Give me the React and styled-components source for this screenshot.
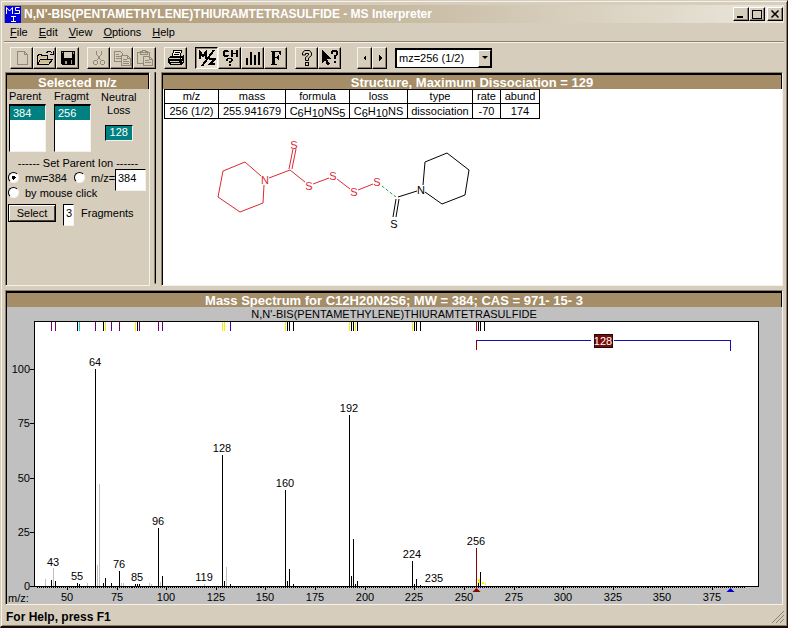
import React from "react";
import styled, { createGlobalStyle } from "styled-components";

const face = "#d6cdbd";
const shade = "#8c806e";
const light = "#f6f2ea";
const brown = "#a48d67";
const teal = "#008080";

const GlobalStyle = createGlobalStyle`
  *, *::before, *::after { box-sizing: border-box; }
  body {
    margin: 0;
    background: ${face};
    color: #000;
    font: 11px/14px "Liberation Sans", Arial, sans-serif;
  }
  button, input, select { font: inherit; color: inherit; margin: 0; padding: 0; border-radius: 0; }
`;

const AppWindow = styled.div`
  display: flex;
  flex-direction: column;
  min-height: 100vh;
  padding: 4px 3px 0 3px;
  background: ${face};
  border: 1px solid;
  border-color: ${face} #1c0c0c #1c0c0c ${face};
  border-bottom-width: 2px;
  box-shadow: inset 1px 1px 0 ${light}, inset -1px -1px 0 ${shade};
`;

const TitleBar = styled.header`
  display: flex;
  align-items: center;
  height: 18px;
  padding: 0 1px;
  background: linear-gradient(90deg, #a48d67, #ebe7dd);
`;

const AppTitle = styled.h1`
  flex: 1;
  margin: 0 0 0 3px;
  color: #fff;
  font-size: 12px;
  font-weight: bold;
  white-space: nowrap;
`;

const CaptionButton = styled.button`
  display: grid;
  place-items: center;
  width: 16px;
  height: 14px;
  margin-left: ${(p) => (p.$apart ? "2px" : "0")};
  background: ${face};
  border: 1px solid;
  border-color: #fff #000 #000 #fff;
  box-shadow: inset -1px -1px 0 ${shade};
`;

const MenuBar = styled.nav`
  display: flex;
  gap: 11px;
  height: 19px;
  padding: 2px 6px;
  border-bottom: 1px solid ${shade};
  box-shadow: 0 1px 0 ${light};
`;

const MenuItem = styled.button`
  background: none;
  border: 0;
  line-height: 14px;
  &::first-letter { text-decoration: underline; }
`;

const Toolbar = styled.div`
  display: flex;
  align-items: center;
  gap: 8px;
  height: 30px;
  padding: 1px 6px 0;
`;

const ToolGroup = styled.div`
  display: flex;
  margin-left: ${(p) => (p.$apart ? "8px" : "0")};
`;

const ToolButton = styled.button`
  display: grid;
  place-items: center;
  width: ${(p) => (p.$narrow ? "15px" : "23px")};
  height: 22px;
  background: ${(p) => (p.$pressed ? "#e6dfd2" : face)};
  border: 1px solid;
  border-color: ${(p) => (p.$pressed ? "#000 #fff #fff #000" : "#f6f2ea #000 #000 #f6f2ea")};
  box-shadow: inset ${(p) => (p.$pressed ? "1px 1px" : "-1px -1px")} 0 ${shade};
`;

const Combo = styled.label`
  display: grid;
  width: 97px;
  height: 20px;
  border: 1px solid #000;
  border-width: 2px 1px 1px 2px;
  background: #fff;
`;

const ComboSelect = styled.select`
  grid-area: 1 / 1;
  appearance: none;
  width: 100%;
  padding-left: 2px;
  background: none;
  border: 0;
  outline: 0;
`;

const ComboArrow = styled.span`
  grid-area: 1 / 1;
  justify-self: end;
  display: grid;
  place-items: center;
  width: 13px;
  background: ${face};
  border: 1px solid;
  border-color: #fff #000 #000 #fff;
  pointer-events: none;
`;

const Workspace = styled.main`
  display: grid;
  grid-template-columns: 145px 11px minmax(0, 1fr);
  row-gap: 4px;
  padding: 0 1px;
`;

const Splitter = styled.div`
  margin: 0 5px 2px 4px;
  border: 1px solid;
  border-color: ${shade} #000 ${face} ${shade};
`;

const Panel = styled.section`
  grid-column: ${(p) => (p.$wide ? "1 / -1" : "auto")};
  display: flex;
  flex-direction: column;
  background: ${(p) => p.$fill || face};
  border: 1px solid;
  border-color: ${shade} ${light} ${light} ${shade};
`;

const PanelBody = styled.div`
  flex: 1;
  min-height: ${(p) => p.$min || "0"};
  border-left: 1px solid #000;
`;

const PanelTitle = styled.h2`
  height: 16px;
  margin: 0;
  background: ${brown};
  border: 1px solid #000;
  border-top-width: 2px;
  border-bottom: 0;
  color: #fff;
  font-size: 13px;
  line-height: 15px;
  font-weight: bold;
  text-align: center;
  white-space: nowrap;
`;

const Pickers = styled.div`
  display: flex;
  gap: 8px;
  padding: 0 2px;
`;

const Picker = styled.div`
  width: 37px;
`;

const PickerLabel = styled.div`
  height: 15px;
  white-space: nowrap;
`;

const ListBox = styled.ul`
  height: 48px;
  margin: 0;
  padding: 0;
  list-style: none;
  background: #fff;
  border: 1px solid;
  border-color: #000 ${light} ${light} #000;
  border-top-width: 2px;
`;

const ListItem = styled.li`
  padding-left: 3px;
  background: ${teal};
  color: #fff;
  line-height: 14px;
`;

const Loss = styled.div`
  display: flex;
  flex-direction: column;
  align-items: center;
  padding: 2px 0 0 2px;
  line-height: 13px;
  text-align: center;
`;

const LossValue = styled.output`
  width: 28px;
  height: 16px;
  margin-top: 8px;
  background: ${teal};
  border: 1px solid;
  border-color: #000 ${light} ${light} #000;
  color: #fff;
`;

const GroupCaption = styled.div`
  margin: 4px 0 0;
  text-align: center;
`;

const FormRow = styled.div`
  display: flex;
  align-items: center;
  height: ${(p) => p.$height};
  padding-left: 1px;
`;

const RadioLabel = styled.label`
  display: flex;
  align-items: center;
  gap: 6px;
  width: ${(p) => p.$width || "auto"};
  white-space: nowrap;
`;

const Radio = styled.input`
  appearance: none;
  flex: none;
  width: 11px;
  height: 11px;
  border: 1px solid;
  border-color: #000 ${light} ${light} #000;
  border-radius: 50%;
  background: #fff;
  &:checked { background: radial-gradient(circle, #000 0 2px, #fff 2px); }
`;

const TextField = styled.input`
  align-self: flex-start;
  width: ${(p) => p.$width};
  height: 22px;
  padding: 0 0 4px 2px;
  background: #fff;
  border: 1px solid;
  border-color: #000 ${light} ${light} #000;
  outline: 0;
`;

const MassField = styled(TextField)`
  margin: -1px 0 0;
`;

const SelectButton = styled.button`
  width: 48px;
  height: 18px;
  background: ${face};
  border: 1px solid #000;
  box-shadow: inset 1px 1px 0 #fff, inset -1px -1px 0 #4a4238;
`;

const CountRow = styled.div`
  display: flex;
  gap: 7px;
  padding: 4px 1px;
`;

const CountLabel = styled.label`
  line-height: 19px;
`;

const FragmentTable = styled.table`
  margin: 0 0 0 1px;
  border-collapse: collapse;
  table-layout: fixed;
  width: 376px;
  th, td {
    height: 15px;
    padding: 0;
    border: 1px solid #000;
    font-weight: normal;
    line-height: 13px;
    text-align: center;
    white-space: nowrap;
  }
  th { height: 14px; }
`;

const Count = styled.sub`
  font-size: 11px;
  line-height: 0;
  vertical-align: -2px;
`;

const Col = styled.col`
  width: ${(p) => p.$width};
`;

const Molecule = styled.svg`
  display: block;
  width: 280px;
  height: 110px;
  margin: 10px 0 0 42px;
  font-size: 11px;
  text-anchor: middle;
`;

const Chart = styled.svg`
  display: block;
  width: 100%;
  height: auto;
  background: #c0c0c0;
  font-size: 11px;
`;

const StatusBar = styled.footer`
  display: flex;
  flex: 1;
  align-items: flex-start;
  justify-content: space-between;
  padding: 5px 0 0 2px;
  font-size: 12px;
  font-weight: bold;
`;

const Icon = ({ size = 18, children }) => (
  <svg width={size} height={size} viewBox={`0 0 ${size} ${size}`} fill="none" stroke="#000" shapeRendering="crispEdges" aria-hidden="true">
    {children}
  </svg>
);

const faded = "#948a78";

const icons = {
  new: <Icon><path d="M4.5 2.5h7l3 3v10h-10zM11.5 2.5v3h3" stroke={faded} /></Icon>,
  open: (
    <Icon>
      <path d="M1.5 15.5v-9h1v-1h3v1h6v3M1.5 15.5l3-5h12l-4 5z" />
      <path d="M3 14l2-3h10l-3 3zM3 7h7v2H4l-1 2z" fill="#d0c08c" stroke="none" />
      <path d="M10.500 3.500l2-1h2l2 2M17.500 2v4M14 5.500h3" />
    </Icon>
  ),
  save: (
    <Icon>
      <path d="M2 2h14v14H3l-1-1z" fill="#000" stroke="none" />
      <path d="M5 3h8v6H5z" fill={face} stroke="none" />
      <path d="M3 3h1v1H3zM14 3h1v2h-1zM6 12h2v3H6zM12 11h1v4h-1z" fill="#a79b86" stroke="none" />
    </Icon>
  ),
  cut: (
    <Icon>
      <g stroke={faded}>
        <path d="M6.500 2v3l4 6M11.500 2v3l-4 6" />
        <circle cx="5.500" cy="13.500" r="2" />
        <circle cx="12.500" cy="13.500" r="2" />
      </g>
    </Icon>
  ),
  copy: (
    <Icon>
      <g stroke={faded}>
        <path d="M1.500 2.500h6l2 2v8h-8zM3 5.500h3M3 7.500h5M3 9.500h5" />
        <path d="M8.500 6.500h6l3 3v7h-9z" fill={face} />
        <path d="M14.500 6.500v3h3M10 10.500h4M10 12.500h6M10 14.500h6" />
      </g>
    </Icon>
  ),
  paste: (
    <Icon>
      <g stroke={faded}>
        <path d="M1.500 3.500h12v11h-12zM4.500 5.500v-3h2v-1h3v1h2v3z" />
        <path d="M7.500 7.500h6l3 3v6h-9z" fill={face} />
        <path d="M13.500 7.500v3h3M9 11.500h4M9 13.500h6" />
      </g>
    </Icon>
  ),
  print: (
    <Icon>
      <path d="M5 7l2-6h8l-2 6z" fill={light} />
      <path d="M8 3.500h5M7 5.500h5" />
      <path d="M1 9l3-2h11l2-2v8l-3 3H3l-2-2z" fill="#000" stroke="none" />
      <path d="M2 9h11v1H2zM4 14h9v1H4zM3 12h9v1H3z" fill={face} stroke="none" />
      <path d="M14 9h1v1h-1zM15 12h1v1h-1z" fill="#fff" stroke="none" />
    </Icon>
  ),
  mz: (
    <Icon>
      <path d="M2 10V3L5 7L8 3V10" strokeWidth="2" />
      <path d="M11 10H17L12 15H17" strokeWidth="2" />
      <path d="M16 1L4 17" strokeWidth="2" />
    </Icon>
  ),
  ch: (
    <Icon>
      <g fill="#000" stroke="none">
        <path d="M3 1h4v2H3zM2 2h2v5H2zM3 6h4v2H3zM6 2h2v1H6zM6 6h2v1H6z" />
        <path d="M10 1h2v7h-2zM15 1h2v7h-2zM12 4h3v1h-3z" />
        <path d="M6 9h5v1H6zM5 10h2v2H5zM10 10h2v2h-2zM8 12h3v1H8zM8 13h2v1H8zM8 15h2v2H8z" />
      </g>
    </Icon>
  ),
  bars: <Icon><path d="M3 16V9M7 16V3M11 16V6M15 16V3" strokeWidth="2" /></Icon>,
  bold: <Icon><path d="M4 2H14V6H13L12 3H8V8H10L11 6H12V11H11L10 9H8V15H10V16H4V15H5V3H4Z" fill="#000" stroke="none" /></Icon>,
  help: (
    <Icon>
      <path d="M4.500 6V4l2-2.500h5l2 2.500v2.500l-3 2.500v2.500h-3V8.500l3-2.500V4.500h-3V6z" shapeRendering="auto" />
      <path d="M7.500 13.500h3v3h-3z" />
    </Icon>
  ),
  context: (
    <Icon>
      <path d="M1 1v13l3-3 2 5 3-1-3-5h4z" fill="#000" stroke="none" />
      <path d="M10 2h2v3h-2zM11 1h5v2h-5zM15 2h2v4h-2zM13 6h3v1h-3zM13 7h2v3h-2zM13 12h2v2h-2z" fill="#000" stroke="none" />
    </Icon>
  ),
  left: <Icon size={8}><path d="M5 1v6L2 4z" fill="#000" stroke="none" /></Icon>,
  right: <Icon size={8}><path d="M3 1v6l3-3z" fill="#000" stroke="none" /></Icon>,
};

const toolGroups = [
  [["New", "new"], ["Open", "open"], ["Save", "save"]],
  [["Cut", "cut"], ["Copy", "copy"], ["Paste", "paste"]],
  [["Print", "print"]],
  [["Select m/z", "mz"], ["Formula", "ch"], ["Spectrum", "bars"], ["Fragments", "bold"]],
  [["Help", "help"], ["Context help", "context"]],
];

const black = "#000";
const purple = "#700070";
const yellow = "#f4f000";
const grey = "#c0c0c0";

const markers = [
  [51, purple], [55, purple], [77, black], [79, "#00d8d8"], [95, purple], [103, black], [105, yellow],
  [111, purple], [119, purple], [135, yellow], [137, black], [139, purple], [158, purple], [162, purple],
  [222, yellow], [224, yellow], [230, "#400090"], [285, yellow], [287, black], [289, black], [293, black],
  [349, yellow], [351, black], [353, black], [355, yellow], [357, black], [412, yellow], [414, black],
  [416, black], [420, black], [476, "#c00020"], [478, black], [480, black], [484, black],
];

const peaks = [
  [45, 579, grey], [51, 580], [53, 568, grey], [55, 581], [77, 583], [79, 584], [87, 583, grey],
  [95, 369], [97, 565, grey], [99, 484, grey], [103, 583], [105, 578], [111, 583], [119, 571],
  [121, 583, grey], [123, 583, grey], [135, 584], [137, 584], [139, 584], [149, 583, grey], [151, 584, grey],
  [158, 528], [160, 582, grey], [162, 576], [204, 584, grey], [222, 455], [224, 581], [226, 567, grey],
  [230, 584], [285, 490], [287, 581], [289, 569], [293, 584], [349, 415], [351, 576], [353, 539],
  [355, 584], [357, 581], [412, 561], [414, 584], [416, 579], [420, 585], [476, 548, "#8b0000"],
  [478, 583], [480, 572],
];

const peakLabels = [
  [53, 566, "43"], [77, 580, "55"], [95, 366, "64"], [119, 568, "76"], [137, 581, "85"], [158, 525, "96"],
  [204, 581, "119"], [222, 452, "128"], [285, 487, "160"], [349, 412, "192"], [412, 558, "224"],
  [434, 582, "235"], [476, 545, "256"],
];

const xAt = (mz) => Math.round(67 + ((mz - 50) * 645) / 325);
const yAt = (value) => Math.round(586 - value * 2.17);
const xTicks = Array.from({ length: 14 }, (_, i) => 50 + i * 25);

function MassSpectrum() {
  return (
    <Chart viewBox="7 307 775 297" role="img" aria-label="Mass spectrum">
      <text x="394" y="318" textAnchor="middle">N,N'-BIS(PENTAMETHYLENE)THIURAMTETRASULFIDE</text>
      <g shapeRendering="crispEdges">
        <rect x="34.5" y="321.5" width="724" height="265" fill="#fff" stroke="#000" />
        {markers.map(([x, c]) => <rect key={x} x={x} y="322" width="1" height="9" fill={c} />)}
        {peaks.map(([x, y, c]) => <rect key={x} x={x} y={y} width="1" height={586 - y} fill={c || black} />)}
        {Array.from({ length: 357 }, (_, i) => <rect key={i} x={xAt(35 + i)} y="587" width="1" height="1" />)}
        {xTicks.map((t) => <rect key={t} x={xAt(t)} y="587" width="1" height="3" />)}
        {[0, 25, 50, 75, 100].map((v) => <rect key={v} x="30" y={yAt(v)} width="4" height="1" />)}
        <path d="M476 340.500H591M614 340.500H730.500V351" fill="none" stroke="#1010b0" />
        <path d="M476.500 340v10" stroke="#8b0000" />
        <rect x="594.500" y="334.500" width="18" height="13" fill="#7c0808" stroke="#1c0808" />
        <path d="M478 579h2v4h-2zM482 582h2v2h-2zM485 583h1v2h-1z" fill={yellow} />
      </g>
      <text x="603" y="345" textAnchor="middle" fill="#fff">128</text>
      <path d="M476.500 588l4 4h-8z" fill="#8b0000" />
      <path d="M730.500 588l4 4h-8z" fill="#0000d8" />
      <g textAnchor="middle">
        {peakLabels.map(([x, y, t]) => <text key={t} x={x} y={y}>{t}</text>)}
        {xTicks.map((t) => <text key={t} x={xAt(t)} y="601">{t}</text>)}
      </g>
      <g textAnchor="end">
        {[0, 25, 50, 75, 100].map((v) => <text key={v} x="30" y={yAt(v) + 4}>{v}</text>)}
      </g>
      <text x="8" y="602">m/z:</text>
    </Chart>
  );
}

function Structure() {
  return (
    <Molecule viewBox="205 130 280 110" role="img" aria-label="Molecular structure">
      <g fill="none" stroke="#dc2834">
        <path d="M261 177L245 163L223 172L218 198L240 213L263 204L264 186" />
        <path d="M269 179L290 171L305 183M289 170L293 150M292 170L296 150" />
        <path d="M313 185L329 179M337 180L350 190M358 191L373 185" />
      </g>
      <path d="M382 187L396 198" stroke="#20a840" strokeDasharray="3 2" />
      <g fill="none" stroke="#000">
        <path d="M398 198L417 192M396 200L393 218M399 200L396 218" />
        <path d="M423 186L425 163L447 154L469 171L465 196L442 205L425 193" />
      </g>
      <g fill="#dc2834">
        <text x="265" y="185">N</text>
        <text x="294" y="150">S</text>
        <text x="309" y="191">S</text>
        <text x="333" y="181">S</text>
        <text x="354" y="197">S</text>
        <text x="377" y="187">S</text>
      </g>
      <text x="421" y="195">N</text>
      <text x="394" y="229">S</text>
    </Molecule>
  );
}

const columns = [
  ["m/z", "54px"], ["mass", "67px"], ["formula", "64px"], ["loss", "58px"],
  ["type", "65px"], ["rate", "28px"], ["abund", "39px"],
];

export default function App() {
  return (
    <>
      <GlobalStyle />
      <AppWindow>
        <TitleBar>
          <svg width="16" height="17" viewBox="0 0 16 17" aria-hidden="true">
            <rect width="16" height="17" fill="#0000e0" />
            <path d="M1.500 8V1.500L4.500 5L7.500 1.500V8M14.500 1.500H10.500V4.500H14.500V7.500H9.500M6 10.500H11M8.500 10.500V15M6 15.500H11" fill="none" stroke="#fff" />
          </svg>
          <AppTitle>N,N'-BIS(PENTAMETHYLENE)THIURAMTETRASULFIDE - MS Interpreter</AppTitle>
          <CaptionButton aria-label="Minimize">
            <Icon size={10}><path d="M1 8h6" strokeWidth="2" /></Icon>
          </CaptionButton>
          <CaptionButton aria-label="Maximize">
            <Icon size={10}><path d="M0.500 1h9v8h-9zM0 1.500h9" /></Icon>
          </CaptionButton>
          <CaptionButton aria-label="Close" $apart>
            <Icon size={10}><path d="M1.500 1.500l7 7M8.500 1.500l-7 7" strokeWidth="1.500" shapeRendering="auto" /></Icon>
          </CaptionButton>
        </TitleBar>
        <MenuBar>
          {["File", "Edit", "View", "Options", "Help"].map((m) => <MenuItem key={m}>{m}</MenuItem>)}
        </MenuBar>
        <Toolbar>
          {toolGroups.map((group) => (
            <ToolGroup key={group[0][0]}>
              {group.map(([name, icon]) => (
                <ToolButton key={icon} aria-label={name} $pressed={icon === "mz"}>{icons[icon]}</ToolButton>
              ))}
            </ToolGroup>
          ))}
          <ToolGroup $apart>
            <ToolButton $narrow aria-label="Previous">{icons.left}</ToolButton>
            <ToolButton $narrow aria-label="Next">{icons.right}</ToolButton>
          </ToolGroup>
          <Combo>
            <ComboSelect aria-label="Fragment"><option>mz=256 (1/2)</option></ComboSelect>
            <ComboArrow>
              <svg width="7" height="4" viewBox="0 0 7 4" aria-hidden="true"><path d="M1 0h6L4 3z" /></svg>
            </ComboArrow>
          </Combo>
        </Toolbar>
        <Workspace>
          <Panel>
            <PanelTitle>Selected m/z</PanelTitle>
            <PanelBody>
              <Pickers>
                <Picker>
                  <PickerLabel id="parent">Parent</PickerLabel>
                  <ListBox role="listbox" aria-labelledby="parent"><ListItem role="option" aria-selected="true">384</ListItem></ListBox>
                </Picker>
                <Picker>
                  <PickerLabel id="fragmt">Fragmt</PickerLabel>
                  <ListBox role="listbox" aria-labelledby="fragmt"><ListItem role="option" aria-selected="true">256</ListItem></ListBox>
                </Picker>
                <Loss>
                  <span>Neutral</span>
                  <span>Loss</span>
                  <LossValue>128</LossValue>
                </Loss>
              </Pickers>
              <GroupCaption>------ Set Parent Ion ------</GroupCaption>
              <FormRow $height="15px">
                <RadioLabel $width="66px"><Radio type="radio" name="ion" defaultChecked />mw=384</RadioLabel>
                <RadioLabel $width="41px"><Radio type="radio" name="ion" />m/z=</RadioLabel>
                <MassField $width="31px" aria-label="Parent m/z" defaultValue="384" />
              </FormRow>
              <FormRow $height="15px">
                <RadioLabel><Radio type="radio" name="ion" />by mouse click</RadioLabel>
              </FormRow>
              <CountRow>
                <SelectButton>Select</SelectButton>
                <TextField id="count" $width="11px" defaultValue="3" />
                <CountLabel htmlFor="count">Fragments</CountLabel>
              </CountRow>
            </PanelBody>
          </Panel>
          <Splitter />
          <Panel $fill="#fff">
            <PanelTitle>Structure, Maximum Dissociation = 129</PanelTitle>
            <PanelBody $min="196px">
              <FragmentTable>
                <colgroup>{columns.map(([n, w]) => <Col key={n} $width={w} />)}</colgroup>
                <thead>
                  <tr>{columns.map(([n]) => <th key={n} scope="col">{n}</th>)}</tr>
                </thead>
                <tbody>
                  <tr>
                    <td>256 (1/2)</td>
                    <td>255.941679</td>
                    <td>C<Count>6</Count>H<Count>10</Count>NS<Count>5</Count></td>
                    <td>C<Count>6</Count>H<Count>10</Count>NS</td>
                    <td>dissociation</td>
                    <td>-70</td>
                    <td>174</td>
                  </tr>
                </tbody>
              </FragmentTable>
              <Structure />
            </PanelBody>
          </Panel>
          <Panel $wide>
            <PanelTitle>Mass Spectrum for C12H20N2S6; MW = 384; CAS = 971- 15- 3</PanelTitle>
            <PanelBody><MassSpectrum /></PanelBody>
          </Panel>
        </Workspace>
        <StatusBar>
          <span>For Help, press F1</span>
          <svg width="12" height="13" viewBox="0 0 12 13" aria-hidden="true">
            <path d="M0 13L12 1M4 13l8-8M8 13l4-4" stroke={shade} />
          </svg>
        </StatusBar>
      </AppWindow>
    </>
  );
}
